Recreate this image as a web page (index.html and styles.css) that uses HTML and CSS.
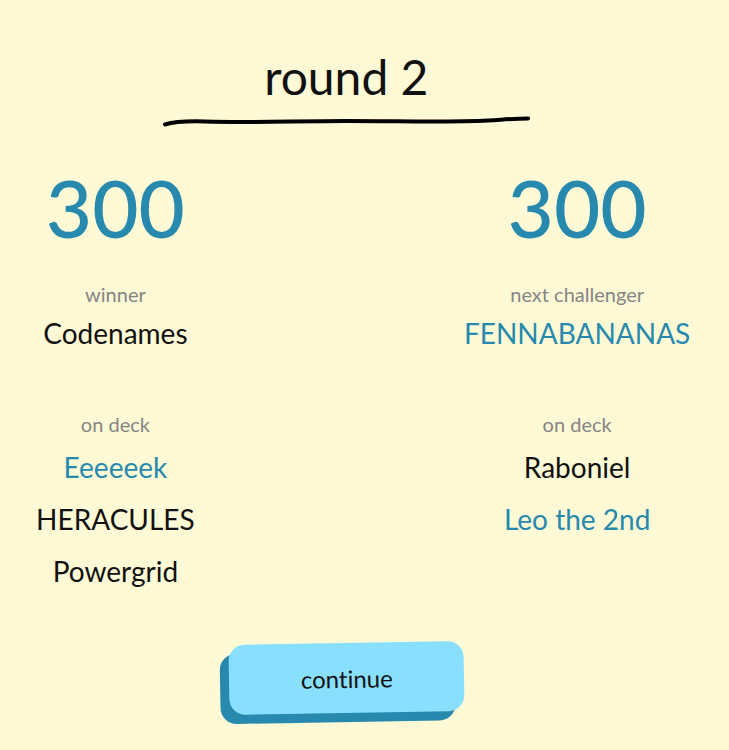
FILE: index.html
```html
<!DOCTYPE html>
<html lang="en">
<head>
  <meta charset="UTF-8">
  <meta name="viewport" content="width=device-width, initial-scale=1.0">
  <title>round 2</title>
  <link rel="stylesheet" href="styles.css">
</head>
<body>
<main class="round">
  <!-- Heading -->
  <header class="round-header">
    <h1 class="round-title">round 2</h1>
    <svg class="underline" viewBox="0 0 368 12" aria-hidden="true">
      <path d="M2 9.500C12 6.500 26 6 42 6.500C92 8 130 6 184 6C240 6 285 7.500 326 5.500C343 4.500 353 3.500 366 3.500" fill="none" stroke="#000" stroke-width="4" stroke-linecap="round" stroke-linejoin="round"/>
    </svg>
  </header>

  <!-- Teams -->
  <div class="teams">
    <section class="team">
      <div class="score">300</div>
      <h2 class="label">winner</h2>
      <p class="name">Codenames</p>
      <h2 class="label deck-label">on deck</h2>
      <ul class="deck">
        <li class="name blue">Eeeeeek</li>
        <li class="name">HERACULES</li>
        <li class="name">Powergrid</li>
      </ul>
    </section>

    <section class="team">
      <div class="score">300</div>
      <h2 class="label">next challenger</h2>
      <p class="name blue">FENNABANANAS</p>
      <h2 class="label deck-label">on deck</h2>
      <ul class="deck">
        <li class="name">Raboniel</li>
        <li class="name blue">Leo the 2nd</li>
      </ul>
    </section>
  </div>

  <button type="button" class="continue-button">continue</button>
</main>
</body>
</html>
```

FILE: styles.css
```css
body {
  margin: 0;
  background: #fff9d5;
  color: #111;
  font-family: Lato, "Open Sans", sans-serif;
  font-variant-ligatures: none;
}

.round {
  width: 95%;
  padding: 44px 0 24px;
  box-sizing: border-box;
  display: flex;
  flex-direction: column;
  align-items: center;
}

.round-header {
  width: 53%;
  display: flex;
  flex-direction: column;
  align-items: center;
}

.round-title {
  margin: 0 0 5px;
  font-size: 48px;
  line-height: 66px;
  font-weight: 400;
}

.underline {
  display: block;
  width: 100%;
}

.teams {
  width: 100%;
  margin-top: 32px;
  display: flex;
  justify-content: space-between;
}

.team {
  width: 33.33%;
  text-align: center;
}

.score {
  color: #2789ae;
  font-size: 80px;
  line-height: 96px;
  font-weight: 500;
}

.label {
  margin: 26px 0 0;
  color: #858585;
  font-size: 20px;
  line-height: 26px;
  font-weight: 400;
}

.name {
  margin: 0;
  font-size: 28px;
  line-height: 52px;
}

.blue {
  color: #2789ae;
}

.deck-label {
  margin-top: 52px;
}

.deck {
  list-style: none;
  margin: 4px 0 0;
  padding: 0;
}

.continue-button {
  width: 34%;
  height: 70px;
  margin-top: 46px;
  border: none;
  border-radius: 16px;
  background: #88dfff;
  box-shadow: -9px 9px 0 #2789ae;
  color: #111;
  font-family: inherit;
  font-size: 24px;
  font-variant-ligatures: none;
  transform: rotate(-1deg);
  cursor: pointer;
}

.continue-button:hover {
  background: #9be5ff;
}
```
